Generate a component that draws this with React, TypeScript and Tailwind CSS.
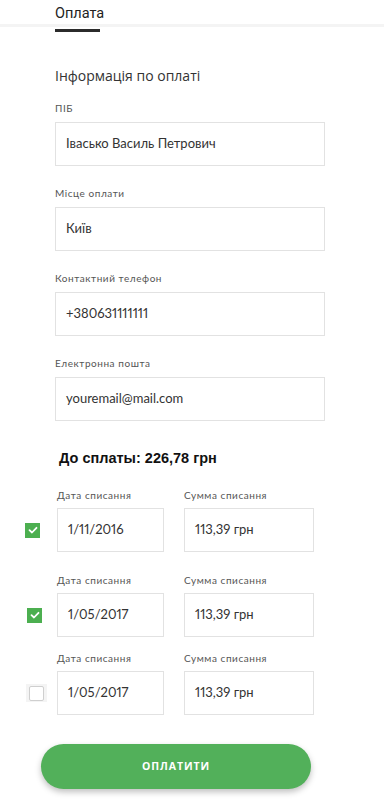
import React from "react";

const body = { fontFamily: '"Open Sans", "Noto Sans", sans-serif' };
const narrow = { fontFamily: 'Lato, "Open Sans", sans-serif' };

function Field({ label, value, mb }: { label: string; value: string; mb: string }) {
  return (
    <div className={mb}>
      <div className="text-[10px] leading-[16px] tracking-[0.55px] text-[#555]" style={narrow}>{label}</div>
      <div className="mt-[6px] flex h-[44px] w-[270px] items-center border border-[#e2e2e2] bg-white pl-[10px] text-[13px] text-[#333] proportional-nums" style={narrow}>
        {value}
      </div>
    </div>
  );
}

function Check({ checked, ml }: { checked: boolean; ml: string }) {
  if (checked) {
    return (
      <div className={`${ml} flex h-[15px] w-[15px] items-center justify-center bg-[#4caf50]`}>
        <svg width="10" height="10" viewBox="0 0 10 10">
          <path d="M1.5 5.2 L4 7.5 L8.5 2.8" fill="none" stroke="white" strokeWidth="1.8" strokeLinecap="round" strokeLinejoin="round" />
        </svg>
      </div>
    );
  }
  return (
    <div className={`${ml} flex h-[18px] w-[21px] items-center justify-center bg-[#f4f4f4]`}>
      <div className="h-[15px] w-[15px] rounded-[2px] border border-[#cfcfcf] bg-white" />
    </div>
  );
}

function PayRow({ date, checked, checkMl, mt }: { date: string; checked: boolean; checkMl: string; mt: string }) {
  return (
    <div className={`${mt} flex`} style={narrow}>
      <div className="flex w-[57px] flex-col">
        <div className="h-[21px]" />
        <div className="flex h-[44px] items-center">
          <Check checked={checked} ml={checkMl} />
        </div>
      </div>
      <div className="w-[127px]">
        <div className="text-[10px] leading-[16px] tracking-[0.55px] text-[#555]">Дата списання</div>
        <div className="mt-[5px] flex h-[44px] w-[107px] items-center border border-[#e2e2e2] pl-[10px] text-[13px] text-[#333] proportional-nums">
          {date}
        </div>
      </div>
      <div>
        <div className="text-[10px] leading-[16px] tracking-[0.55px] text-[#555]">Сумма списання</div>
        <div className="mt-[5px] flex h-[44px] w-[130px] items-center border border-[#e2e2e2] pl-[10px] text-[13px] text-[#333] proportional-nums">
          113,39 грн
        </div>
      </div>
    </div>
  );
}

export default function App() {
  return (
    <div className="min-h-[807px] w-[384px] bg-white" style={body}>
      <div className="h-[27px] border-b-[3px] border-[#f4f4f4]">
        <div className="ml-[55px] inline-block h-[27px] w-[45px] border-b-[3px] border-[#2b2b2b]">
          <div className="text-[14.5px] leading-[18px] text-[#222]" style={{ fontFamily: "Roboto, sans-serif" }}>
            Оплата
          </div>
        </div>
      </div>

      <div className="pl-[55px]">
        <div className="mt-[39px] text-[14px] leading-[20px] text-[#333]">Інформація по оплаті</div>
        <div className="mt-[14px]">
          <Field label="ПІБ" value="Івасько Василь Петрович" mb="mb-[19px]" />
          <Field label="Місце оплати" value="Київ" mb="mb-[19px]" />
          <Field label="Контактний телефон" value="+380631111111" mb="mb-[19px]" />
          <Field label="Електронна пошта" value="youremail@mail.com" mb="" />
        </div>
        <div
          className="ml-[4px] mt-[27px] text-[14.5px] font-bold leading-[20px] text-[#111]"
          style={{ fontFamily: '"Liberation Sans", Arial, sans-serif' }}
        >
          До сплаты: 226,78 грн
        </div>
      </div>

      <PayRow date="1/11/2016" checked checkMl="ml-[25px]" mt="mt-[19px]" />
      <PayRow date="1/05/2017" checked checkMl="ml-[27px]" mt="mt-[20px]" />
      <PayRow date="1/05/2017" checked={false} checkMl="ml-[26px]" mt="mt-[13px]" />

      <div className="ml-[41px] mt-[29px] flex h-[45px] w-[270px] items-center justify-center rounded-full bg-[#52b05a] shadow-[0_3px_6px_rgba(0,0,0,0.25)]">
        <span className="text-[10.5px] font-bold tracking-[0.9px] text-white">ОПЛАТИТИ</span>
      </div>
    </div>
  );
}
